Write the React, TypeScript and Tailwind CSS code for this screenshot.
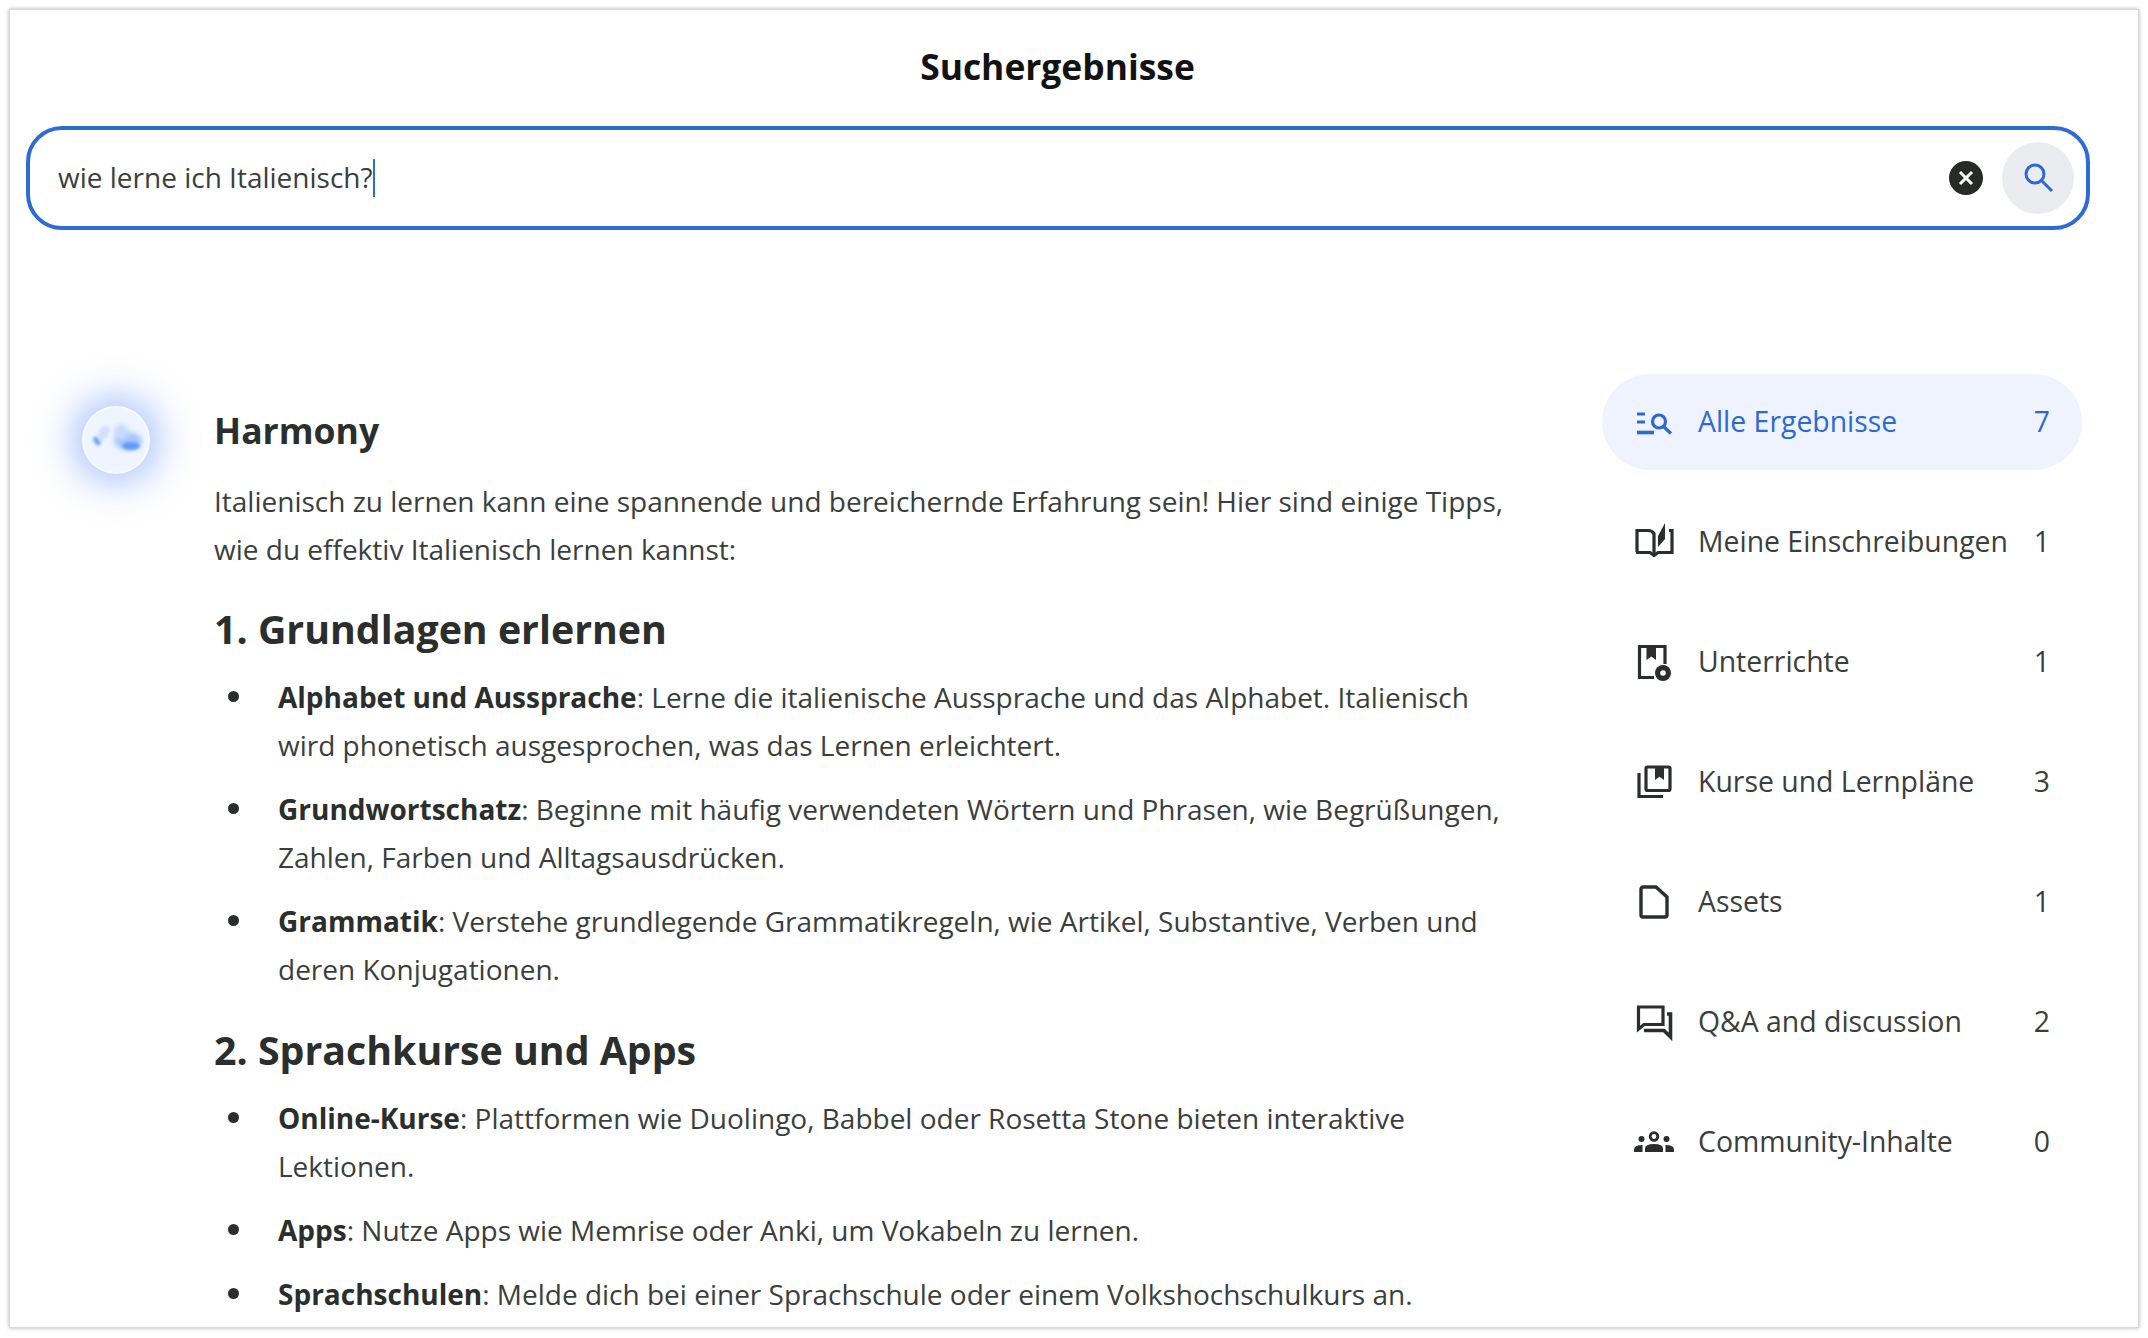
import React from "react";

const dark = "#2a2e2c";

function AlleIcon() {
  return (
    <svg width="40" height="40" viewBox="0 0 40 40" fill="none" stroke="#2d69d4" strokeWidth="3.2">
      <path d="M3 12h8M3 20h8" />
      <path d="M3 30.5h17" strokeWidth="3.6" />
      <circle cx="25" cy="19.5" r="6.5" />
      <path d="M29.5 24.5L37 31.5" />
    </svg>
  );
}
function BookIcon() {
  return (
    <svg width="40" height="40" viewBox="0 0 40 40" fill="none" stroke={dark} strokeWidth="3.2">
      <path d="M3 30V8.5h11q4 0 6 3v21.5" />
      <path d="M2 30.5h14l4 3 4-3h14V8.5h-3" />
      <path d="M24 14L31 1V17L24 25Z" fill={dark} stroke="none" />
    </svg>
  );
}
function LessonIcon() {
  return (
    <svg width="40" height="40" viewBox="0 0 40 40" fill="none" stroke={dark} strokeWidth="3.2">
      <path d="M31 22V4.5H5.5V35.5H20" />
      <path d="M12.5 4h9.5v14l-4.7-3.4-4.8 3.4z" fill={dark} stroke="none" />
      <circle cx="29" cy="31" r="8" fill={dark} stroke="none" />
      <circle cx="29" cy="31" r="2.8" fill="#fff" stroke="none" />
    </svg>
  );
}
function CourseIcon() {
  return (
    <svg width="40" height="40" viewBox="0 0 40 40" fill="none" stroke={dark} strokeWidth="3.2">
      <path d="M5 11V34.5H29" />
      <rect x="12" y="5" width="24" height="23.5" rx="1.5" />
      <path d="M21 5h9v13l-4.5-3.2-4.5 3.2z" fill={dark} stroke="none" />
    </svg>
  );
}
function FileIcon() {
  return (
    <svg width="40" height="40" viewBox="0 0 40 40" fill="none" stroke={dark} strokeWidth="3.4">
      <path d="M9 5h13l11 10v18a2 2 0 0 1-2 2H9a2 2 0 0 1-2-2V7a2 2 0 0 1 2-2z" />
    </svg>
  );
}
function ChatIcon() {
  return (
    <svg width="40" height="40" viewBox="0 0 40 40" fill="none" stroke={dark} strokeWidth="3.2">
      <path d="M29 5H4.5V27L10 22.5H29Z" />
      <path d="M33 12H36.5V35L30 28.5H10" strokeWidth="3.6" />
    </svg>
  );
}
function PeopleIcon() {
  return (
    <svg width="40" height="40" viewBox="0 0 40 40" fill={dark}>
      <circle cx="20" cy="14.5" r="3.8" fill="none" stroke={dark} strokeWidth="2.8" />
      <path d="M11 30v-3.5q0-4.5 9-4.5t9 4.5V30z" />
      <circle cx="7.5" cy="17" r="3" />
      <circle cx="32.5" cy="17" r="3" />
      <path d="M0 30v-2.5q0-4.5 8.5-4.5V30z" />
      <path d="M40 30v-2.5q0-4.5-8.5-4.5V30z" />
    </svg>
  );
}

function Avatar() {
  return (
    <div className="w-[68px] h-[68px] rounded-full bg-[#eff5fe] border-2 border-[#f7faff] shadow-[0_0_36px_10px_rgba(92,142,245,0.5)] overflow-hidden">
      <svg width="64" height="64" viewBox="0 0 64 64">
        <defs>
          <filter id="b1" x="-50%" y="-50%" width="200%" height="200%">
            <feGaussianBlur stdDeviation="2.6" />
          </filter>
          <filter id="b2" x="-50%" y="-50%" width="200%" height="200%">
            <feGaussianBlur stdDeviation="1.6" />
          </filter>
        </defs>
        <ellipse cx="44" cy="33" rx="14" ry="9" fill="#a5c6fa" filter="url(#b1)" />
        <ellipse cx="37" cy="24" rx="7" ry="8" fill="#c4d9fb" filter="url(#b1)" />
        <ellipse cx="47" cy="38" rx="9" ry="4" fill="#5f9bf5" filter="url(#b2)" />
        <ellipse cx="13" cy="33" rx="3" ry="5" fill="#6ea3f5" filter="url(#b2)" transform="rotate(-35 13 33)" />
        <ellipse cx="20" cy="25" rx="5" ry="8" fill="#d0e0fb" filter="url(#b2)" transform="rotate(30 20 25)" />
      </svg>
    </div>
  );
}

const nav: [React.ReactNode, string, number][] = [
  [<BookIcon />, "Meine Einschreibungen", 1],
  [<LessonIcon />, "Unterrichte", 1],
  [<CourseIcon />, "Kurse und Lernpläne", 3],
  [<FileIcon />, "Assets", 1],
  [<ChatIcon />, "Q&A and discussion", 2],
  [<PeopleIcon />, "Community-Inhalte", 0],
];

function Li({ b, children }: { b: string; children: React.ReactNode }) {
  return (
    <li className="relative mb-[16px]">
      <span className="absolute left-[-50px] top-[18px] w-[11px] h-[11px] rounded-full bg-[#2a2e2c]" />
      <strong className="font-bold text-[#2a2e2c]">{b}</strong>
      {children}
    </li>
  );
}

export default function App() {
  return (
    <div
      className="w-[2148px] h-[1338px] bg-white pl-[9px] pt-[9px] overflow-hidden"
      style={{ fontFamily: '"Open Sans", "Noto Sans", sans-serif' }}
    >
      <div className="w-[2130px] h-[1319px] bg-white border border-[#d9d9d9] shadow-[0_0_4px_rgba(0,0,0,0.3)] overflow-hidden pl-[16px] pr-[49px]">
        <h1 className="mt-[32px] h-[48px] leading-[48px] text-center text-[35.4px] font-bold text-[#121212]">
          Suchergebnisse
        </h1>
        <div className="mt-[36px] h-[104px] w-[2064px] rounded-[36px] border-[4px] border-[#2f6bd6] flex items-center pl-[28px] pr-[12px]">
          <span className="text-[28px] text-[#3a3e3c] mb-[2px]">wie lerne ich Italienisch?</span>
          <span className="w-[2px] h-[38px] bg-[#2f6bd6]" />
          <div className="ml-auto w-[34px] h-[34px] rounded-full bg-[#262b28] flex items-center justify-center">
            <svg width="18" height="18" viewBox="0 0 18 18" stroke="#fff" strokeWidth="3">
              <path d="M3 3l12 12M15 3L3 15" />
            </svg>
          </div>
          <div className="ml-[19px] w-[72px] h-[72px] rounded-full bg-[#ebecef] flex items-center justify-center">
            <svg width="36" height="36" viewBox="0 0 36 36" fill="none" stroke="#2d69d4" strokeWidth="3">
              <circle cx="15" cy="14" r="9" />
              <path d="M21.5 20.5L32 31" />
            </svg>
          </div>
        </div>
        <div className="flex mt-[144px]">
          <div className="flex w-[1576px] shrink-0">
            <div className="w-[188px] shrink-0 pl-[56px] pt-[32px]">
              <Avatar />
            </div>
            <div className="w-[1310px] text-[28px] leading-[48px] text-[#3a3e3c]">
              <h2 className="mt-[32px] text-[35.5px] leading-[48px] font-bold text-[#2a2e2c]">Harmony</h2>
              <p className="mt-[23px]">
                Italienisch zu lernen kann eine spannende und bereichernde Erfahrung sein! Hier sind einige Tipps, wie du effektiv Italienisch lernen kannst:
              </p>
              <h3 className="mt-[32px] text-[39.3px] leading-[48px] font-bold text-[#2a2e2c]">1. Grundlagen erlernen</h3>
              <ul className="mt-[20px] pl-[64px]">
                <Li b="Alphabet und Aussprache">: Lerne die italienische Aussprache und das Alphabet. Italienisch wird phonetisch ausgesprochen, was das Lernen erleichtert.</Li>
                <Li b="Grundwortschatz">: Beginne mit häufig verwendeten Wörtern und Phrasen, wie Begrüßungen, Zahlen, Farben und Alltagsausdrücken.</Li>
                <Li b="Grammatik">: Verstehe grundlegende Grammatikregeln, wie Artikel, Substantive, Verben und deren Konjugationen.</Li>
              </ul>
              <h3 className="mt-[33px] text-[39.3px] leading-[48px] font-bold text-[#2a2e2c]">2. Sprachkurse und Apps</h3>
              <ul className="mt-[20px] pl-[64px]">
                <Li b="Online-Kurse">: Plattformen wie Duolingo, Babbel oder Rosetta Stone bieten interaktive Lektionen.</Li>
                <Li b="Apps">: Nutze Apps wie Memrise oder Anki, um Vokabeln zu lernen.</Li>
                <Li b="Sprachschulen">: Melde dich bei einer Sprachschule oder einem Volkshochschulkurs an.</Li>
              </ul>
            </div>
          </div>
          <div className="w-[480px] shrink-0 text-[28.4px] text-[#3a3e3c]">
            <div className="h-[96px] rounded-[48px] bg-[#eef3fd] flex items-center pl-[32px] pr-[32px] text-[#2d69d4] mb-[24px]">
              <AlleIcon />
              <span className="ml-[24px] mb-[2px]">Alle Ergebnisse</span>
              <span className="ml-auto mb-[2px]">7</span>
            </div>
            {nav.map(([icon, label, n]) => (
              <div key={label} className="h-[96px] flex items-center pl-[32px] pr-[32px] mb-[24px]">
                {icon}
                <span className="ml-[24px] mb-[2px]">{label}</span>
                <span className="ml-auto mb-[2px]">{n}</span>
              </div>
            ))}
          </div>
        </div>
      </div>
    </div>
  );
}
